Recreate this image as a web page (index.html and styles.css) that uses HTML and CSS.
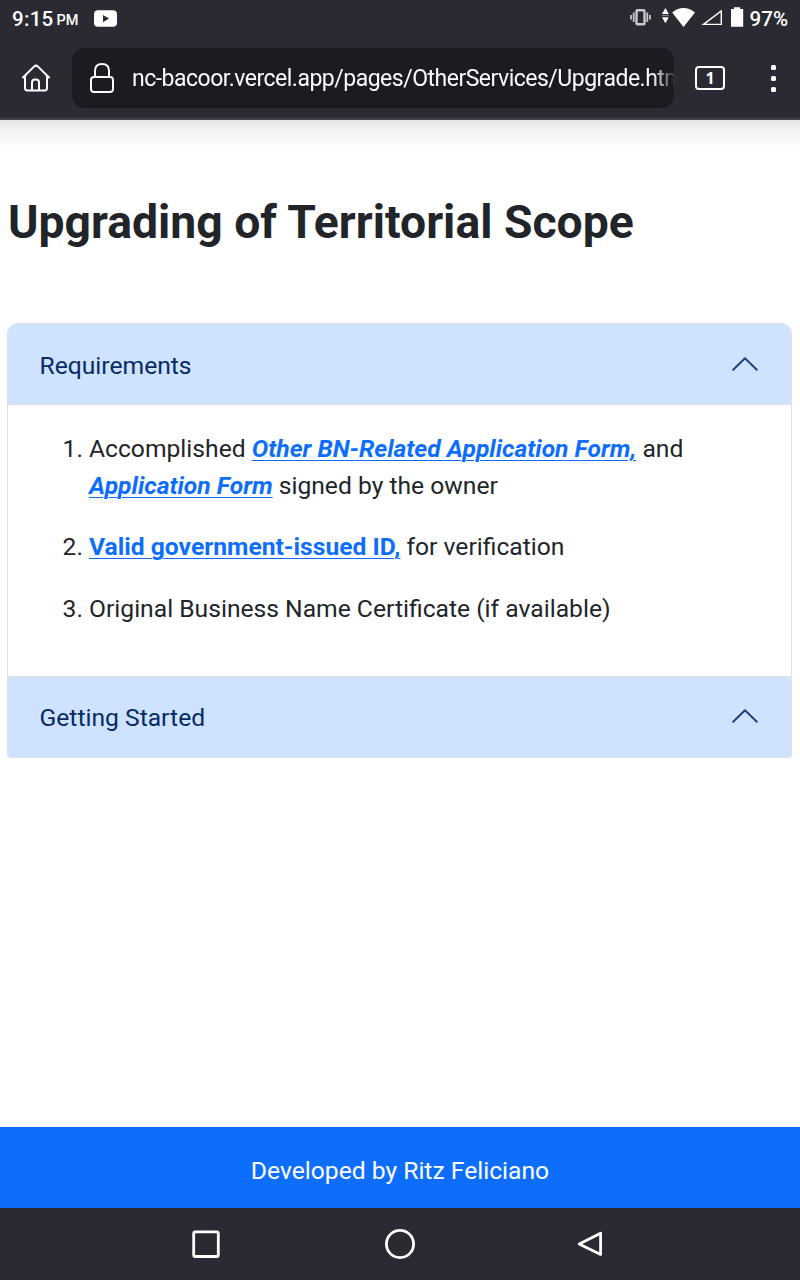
FILE: index.html
```html
<!DOCTYPE html>
<html lang="en">
<head>
<meta charset="utf-8">
<title>Upgrading of Territorial Scope</title>
<link rel="stylesheet" href="styles.css">
</head>
<body>
<header class="chrome">
  <div class="status">
    <span class="time">9:15</span><span class="pm">PM</span>
    <svg class="video" width="24" height="18" viewBox="0 0 24 18"><rect x="0" y="0.2" width="23" height="16.5" rx="4" fill="#fff"/><path d="M9 5v7.2l6-3.6z" fill="#2b2a33"/></svg>
    <svg class="signals" width="116" height="24" viewBox="0 0 116 24">
      <g fill="none" stroke="#c8c8cb"><rect x="6.5" y="3.2" width="8" height="14" rx="1" stroke-width="2.4"/><path d="M3.7 5.5v9.6M17.3 5.5v9.6M1 8v4.6M20 8v4.6" stroke-width="1.8"/></g>
      <g fill="#fff"><path d="M32 7l3.4-6 3.4 6zM32 10.3h6.8l-3.4 6z"/><path d="M32 8.2h6.800v.7H32z" opacity=".6"/><path d="M42.2 5.5Q53.5-3.4 65 5.5L53.500 20z"/><path d="M101 2h3V.2h6.200V2h3v17.800H101z"/></g>
      <path d="M73.500 17.400L91.300 4v13.400z" fill="none" stroke="#fff" stroke-width="1.400"/>
    </svg>
    <span class="percent">97%</span>
  </div>
  <div class="toolbar">
    <svg class="home" width="30" height="32" viewBox="0 0 30 32" fill="none" stroke="#fbfbfe" stroke-width="2" stroke-linecap="round" stroke-linejoin="round"><path d="M2 15.5L13.2 4.4q1.8-1.5 3.6 0L28 15.5M4 14v12q0 2.5 2.5 2.5h17q2.5 0 2.5-2.5V14M11 28.5V20.5q0-3 3-3h1q3 0 3 3V28.5"/></svg>
    <div class="address">
      <svg width="26" height="32" viewBox="0 0 26 32" fill="none" stroke="#fbfbfe" stroke-width="2"><rect x="2" y="15" width="22" height="15" rx="3"/><path d="M6 15V8.8q0-6.8 7-6.8t7 6.8V15"/></svg>
      <span class="url">nc-bacoor.vercel.app/pages/OtherServices/Upgrade.htm</span>
    </div>
    <div class="tabs">1</div>
    <div class="menu"><i></i><i></i><i></i></div>
  </div>
</header>
<main class="page">
  <h1 class="title">Upgrading of Territorial Scope</h1>
  <section class="accordion">
    <div class="bar"><span>Requirements</span><svg width="28" height="16" viewBox="0 0 28 16"><path d="M2.2 13.8L14 2.2l11.8 11.6" fill="none" stroke="#1d3f7e" stroke-width="1.9" stroke-linecap="round" stroke-linejoin="round"/></svg></div>
    <div class="body">
      <ol class="list">
        <li>Accomplished <a class="link italic">Other BN-Related Application Form,</a> and<br><a class="link italic">Application Form</a> signed by the owner</li>
        <li><a class="link">Valid government-issued ID,</a> for verification</li>
        <li>Original Business Name Certificate (if available)</li>
      </ol>
    </div>
    <div class="bar last"><span>Getting Started</span><svg width="28" height="16" viewBox="0 0 28 16"><path d="M2.2 13.8L14 2.2l11.8 11.6" fill="none" stroke="#1d3f7e" stroke-width="1.9" stroke-linecap="round" stroke-linejoin="round"/></svg></div>
  </section>
</main>
<footer class="credit">Developed by Ritz Feliciano</footer>
<nav class="system">
  <svg width="800" height="72" viewBox="0 0 800 72" fill="none" stroke="#fff" stroke-width="2.8" stroke-linejoin="round"><rect x="193.7" y="23.9" width="24.6" height="24.6" rx="1.5"/><circle cx="400" cy="36" r="13.6"/><path d="M579.2 36L600.6 25.2v21.4z"/></svg>
</nav>
</body>
</html>
```
FILE: styles.css
```css
* { box-sizing: border-box; }
body {
  margin: 0;
  height: 1280px;
  display: flex;
  flex-direction: column;
  overflow: hidden;
  font-family: Roboto, "Liberation Sans", sans-serif;
  font-size: 24.65px;
  line-height: 37px;
  color: #212529;
  background: #fff;
}
svg { display: block; flex: none; }
.chrome {
  height: 120px;
  flex: none;
  background: #2b2a33;
  border-bottom: 2px solid #42414d;
  color: #fff;
}
.status {
  height: 38px;
  display: flex;
  align-items: center;
  padding: 0 12px;
  line-height: 38px;
}
.time { font-size: 20.5px; font-weight: 500; letter-spacing: 0.3px; }
.pm { font-size: 14.5px; font-weight: 500; margin-left: 3px; padding-top: 4px; }
.video { margin-left: 15px; }
.signals { margin-left: auto; overflow: visible; }
.percent { font-size: 20.5px; font-weight: 500; margin-left: 4px; }
.toolbar {
  height: 80px;
  display: flex;
  align-items: center;
  padding-left: 21px;
}
.address {
  width: 602px;
  height: 60px;
  margin-left: 21px;
  padding-left: 17px;
  border-radius: 12px;
  background: #1c1b22;
  display: flex;
  align-items: center;
  overflow: hidden;
}
.url {
  flex: none;
  margin-left: 17px;
  padding-top: 1px;
  white-space: nowrap;
  font-size: 23px;
  letter-spacing: -0.5px;
  color: #fbfbfe;
  -webkit-mask-image: linear-gradient(90deg, #000 520px, transparent 546px);
  mask-image: linear-gradient(90deg, #000 520px, transparent 546px);
}
.tabs {
  width: 30px;
  height: 24px;
  margin-left: 21px;
  border: 2px solid #fff;
  border-radius: 4px;
  font: bold 16px/20px "Noto Sans", sans-serif;
  text-align: center;
}
.menu { margin-left: 46px; display: grid; gap: 6px; }
.menu i { width: 5px; height: 5px; border-radius: 1.5px; background: #fff; }
.page {
  flex: 1;
  padding: 75px 8px 0 7px;
  background: linear-gradient(#e3e3e3, #f3f3f3 10px, #fcfcfc 24px, #fff 35px) no-repeat 0 0 / 100% 35px;
}
.title {
  margin: 0 0 73px 1px;
  font-size: 46.3px;
  line-height: 55px;
  font-weight: 700;
  white-space: nowrap;
}
.accordion {
  height: 435px;
  border: 1px solid #dee2e6;
  border-radius: 10px 10px 3px 3px;
  overflow: hidden;
}
.bar {
  height: 81px;
  padding: 2px 32px 0 31.5px;
  display: flex;
  align-items: center;
  justify-content: space-between;
  background: #cfe2ff;
  color: #052c65;
  border-bottom: 1px solid #dee2e6;
}
.bar svg { margin-bottom: 2px; }
.bar.last { border-top: 1px solid #dee2e6; height: 82px; padding-top: 0; }
.body { height: 271px; padding: 24.5px 30px 0 31px; }
.list { margin: 0; padding-left: 50px; }
.list li { margin-bottom: 24.5px; white-space: nowrap; }
.link {
  color: #0d6efd;
  font-weight: 700;
  text-decoration: underline;
  text-decoration-thickness: 1px;
  text-underline-offset: 3px;
}
.italic { font-style: italic; }
.credit {
  flex: none;
  height: 81px;
  padding-top: 6px;
  line-height: 75px;
  text-align: center;
  color: #fff;
  background: #0d6efd;
}
.system { flex: none; height: 72px; background: #2b2a33; }
```
